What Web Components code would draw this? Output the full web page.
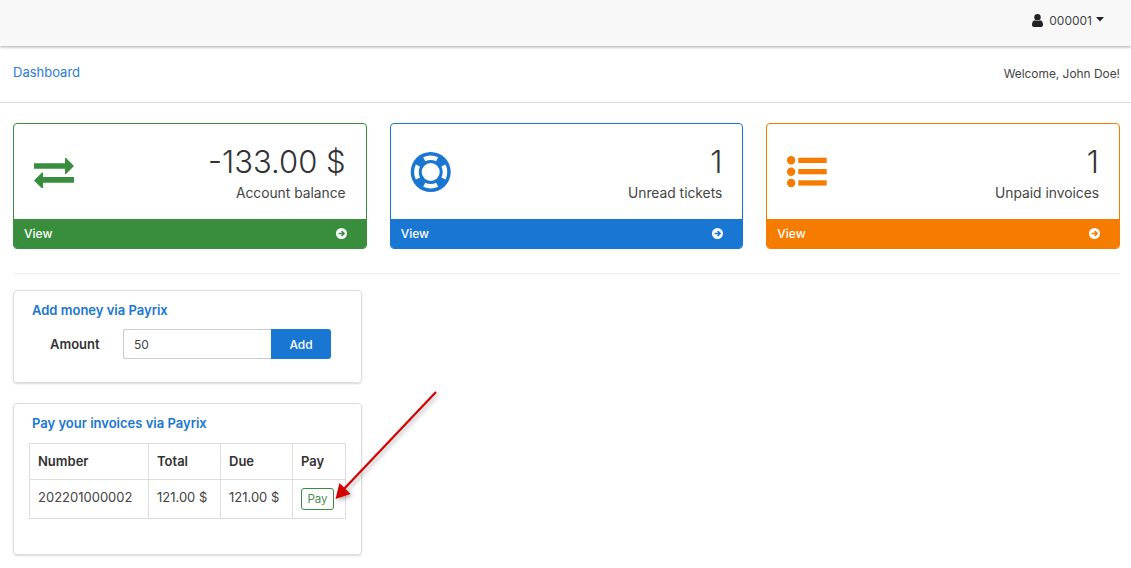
<!DOCTYPE html>
<html>
<head>
<meta charset="utf-8">
<title>Dashboard</title>
<style>
    html, body{
        margin: 0;
        background-color: #fff;
        font-family: Inter, "Liberation Sans", sans-serif;
        font-size: 13px;
        color: #333;
    }
    body{
        position: relative;
        height: 568px;
        overflow: hidden;
    }
</style>
</head>
<body>
<app-navbar account="000001"></app-navbar>
<app-crumbs welcome="Welcome, John Doe!">Dashboard</app-crumbs>
<app-content>
    <stat-row>
        <stat-card color="#388e3c" value="-133.00 $" label="Account balance" icon="exchange"></stat-card>
        <stat-card color="#1976d2" value="1" label="Unread tickets" icon="ring"></stat-card>
        <stat-card color="#f57c00" value="1" label="Unpaid invoices" icon="list"></stat-card>
    </stat-row>
    <app-panel heading="Add money via Payrix" pad="add"><money-form></money-form></app-panel>
    <app-panel heading="Pay your invoices via Payrix" pad="pay"><invoice-table></invoice-table></app-panel>
</app-content>
<pay-arrow></pay-arrow>

<script>
const ICONS = {
    exchange: `<svg width="42" height="32" viewBox="0 0 42 32"><path d="M1 7.300H32V2H33L41 10L33 18H32V12.700H1Z"/><path d="M41 21H10V16.500H9L1 24.500L9 32.500H10V26.700H41Z"/></svg>`,
    ring: `<svg width="41" height="40" viewBox="0 0 41 40"><circle cx="20.700" cy="20" r="20"/><circle cx="20.700" cy="20" r="14.300" fill="none" stroke="#fff" stroke-width="4.600" pathLength="360" stroke-dasharray="54 36" stroke-dashoffset="27"/><circle cx="20.700" cy="20" r="9" fill="#fff"/></svg>`,
    list: `<svg width="42" height="34" viewBox="0 0 42 34"><circle cx="5.150" cy="5.300" r="4.200"/><circle cx="5.150" cy="16.700" r="4.200"/><circle cx="5.150" cy="28" r="4.200"/><rect x="12.300" y="2.700" width="28.400" height="5.300"/><rect x="12.300" y="14" width="28.400" height="5.300"/><rect x="12.300" y="25.300" width="28.400" height="5.300"/></svg>`
}

class AppNavbar extends HTMLElement {
    constructor(){
        super();
        this.attachShadow({mode: 'open'});
        this.shadowRoot.innerHTML = `
        <style>
            :host{
                display: flex;
                justify-content: flex-end;
                align-items: center;
                height: 46px;
                box-sizing: border-box;
                padding: 0 27px 6px 0;
                background-color: #f8f8f8;
                box-shadow: 0 1px 3px rgba(0,0,0,.35);
                position: relative;
                font-size: 12px;
                color: #444;
            }
            .user{ display: block; margin-right: 6px; }
            .caret{ display: block; margin-left: 4px; margin-top: -2px; }
        </style>
        <svg class="user" width="11" height="13" viewBox="0 0 11 13" fill="#222"><circle cx="5.500" cy="3.200" r="3.200"/><path d="M0 11C0 8 1 6.500 2.800 6.200C4.300 7.300 6.700 7.300 8.200 6.200C10 6.500 11 8 11 11C11 12.300 10.300 13 9 13H2C.7 13 0 12.300 0 11Z"/></svg>
        <span>${this.getAttribute('account')}</span>
        <svg class="caret" width="8" height="5" viewBox="0 0 8 5" fill="#222"><path d="M0 0H8L4 4.500Z"/></svg>`;
    }
}

class AppCrumbs extends HTMLElement {
    constructor(){
        super();
        this.attachShadow({mode: 'open'});
        this.shadowRoot.innerHTML = `
        <style>
            :host{
                display: flex;
                justify-content: space-between;
                align-items: center;
                height: 52px;
                margin-top: 1px;
                padding: 0 11px 3px 13px;
                border-bottom: 1px solid #ddd;
            }
            a{ color: #2b7bd8; text-decoration: none; font-size: 13px; padding-bottom: 2px; }
            span{ font-size: 11.900px; color: #444; }
        </style>
        <a href="#"><slot></slot></a>
        <span>${this.getAttribute('welcome')}</span>`;
    }
}

class AppContent extends HTMLElement {
    constructor(){
        super();
        this.attachShadow({mode: 'open'});
        this.shadowRoot.innerHTML = `
        <style>
            :host{
                display: block;
                padding: 20px 11px 0 13px;
            }
        </style>
        <slot></slot>`;
    }
}

class StatRow extends HTMLElement {
    constructor(){
        super();
        this.attachShadow({mode: 'open'});
        this.shadowRoot.innerHTML = `
        <style>
            :host{
                display: grid;
                grid-template-columns: repeat(3, 1fr);
                column-gap: 23px;
                padding-bottom: 24px;
                margin-bottom: 16px;
                border-bottom: 1px solid #eee;
            }
        </style>
        <slot></slot>`;
    }
}

class StatCard extends HTMLElement {
    constructor(){
        super();
        this.attachShadow({mode: 'open'});
        const color = this.getAttribute('color');
        this.shadowRoot.innerHTML = `
        <style>
            :host{
                display: flex;
                flex-direction: column;
                height: 126px;
                box-sizing: border-box;
                border: 1px solid ${color};
                border-radius: 4px;
                overflow: hidden;
            }
            .body{
                flex: 1;
                display: flex;
                justify-content: space-between;
                align-items: center;
                padding: 0 20px 0 19px;
            }
            .icon{ display: flex; fill: ${color}; }
            .info{ text-align: right; }
            .value{
                font-size: 31px;
                font-weight: 300;
                line-height: 39px;
                color: #333;
            }
            .label{
                font-size: 13.800px;
                line-height: 17px;
                margin-top: 4px;
                color: #444;
            }
            .foot{
                display: flex;
                justify-content: space-between;
                align-items: center;
                height: 29px;
                padding: 0 19px 0 10px;
                background-color: ${color};
                color: #fff;
                font-size: 12px;
                font-weight: 500;
            }
            .foot svg{ display: block; }
        </style>
        <div class="body">
            <div class="icon">${ICONS[this.getAttribute('icon')]}</div>
            <div class="info">
                <div class="value">${this.getAttribute('value')}</div>
                <div class="label">${this.getAttribute('label')}</div>
            </div>
        </div>
        <div class="foot">
            <span>View</span>
            <svg width="11" height="11" viewBox="0 0 11 11"><circle cx="5.500" cy="5.500" r="5.500" fill="#fff"/><path d="M2.600 5.500H8M5.600 3L8.100 5.500L5.600 8" fill="none" stroke="${color}" stroke-width="1.600"/></svg>
        </div>`;
    }
}

class AppPanel extends HTMLElement {
    constructor(){
        super();
        this.attachShadow({mode: 'open'});
        this.shadowRoot.innerHTML = `
        <style>
            :host{
                display: block;
                width: 349px;
                box-sizing: border-box;
                border: 1px solid #ddd;
                border-radius: 4px;
                box-shadow: 0 1px 2px rgba(0,0,0,.15);
                margin-bottom: 20px;
                padding: 11px 15px 0 15px;
            }
            :host([pad="add"]){ height: 93px; }
            :host([pad="pay"]){ height: 152px; }
            h3{
                margin: 0 0 11px 3px;
                font-size: 13px;
                line-height: 16px;
                font-weight: 600;
                color: #1976d2;
            }
            :host([pad="pay"]) h3{ margin-bottom: 12px; }
        </style>
        <h3>${this.getAttribute('heading')}</h3>
        <slot></slot>`;
    }
}

class MoneyForm extends HTMLElement {
    constructor(){
        super();
        this.attachShadow({mode: 'open'});
        this.shadowRoot.innerHTML = `
        <style>
            :host{
                display: flex;
                align-items: center;
                height: 30px;
            }
            label{
                width: 94px;
                padding-left: 21px;
                box-sizing: border-box;
                font-weight: 600;
                font-size: 13px;
                color: #333;
            }
            input{
                width: 148px;
                height: 30px;
                box-sizing: border-box;
                padding: 0 10px;
                border: 1px solid #ccc;
                border-right: 0;
                border-radius: 3px 0 0 3px;
                font: inherit;
                font-size: 12px;
                color: #444;
                outline: none;
            }
            button{
                width: 60px;
                height: 30px;
                border: 0;
                border-radius: 0 3px 3px 0;
                background-color: #1976d2;
                color: #fff;
                font: inherit;
                font-size: 12px;
                font-weight: 500;
            }
        </style>
        <label>Amount</label>
        <input value="50">
        <button>Add</button>`;
    }
}

class InvoiceTable extends HTMLElement {
    constructor(){
        super();
        this.attachShadow({mode: 'open'});
        this.shadowRoot.innerHTML = `
        <style>
            :host{ display: block; }
            table{
                border-collapse: collapse;
                table-layout: fixed;
                width: 316px;
                font-size: 13px;
            }
            th, td{
                border: 1px solid #ddd;
                padding: 0 8px;
                text-align: left;
                color: #444;
            }
            th{ height: 33px; padding-bottom: 2px; font-weight: 600; color: #333; }
            td{ height: 34px; padding-bottom: 4px; }
            td.action{ height: 38px; padding-bottom: 0; }
            button{
                display: block;
                width: 33px;
                height: 22px;
                padding: 0;
                margin-bottom: 1px;
                background: #fff;
                border: 1px solid #388e3c;
                border-radius: 3px;
                color: #4c8f50;
                font: inherit;
                font-size: 11.500px;
            }
        </style>
        <table>
            <colgroup><col style="width:119px"><col style="width:72px"><col style="width:72px"><col style="width:53px"></colgroup>
            <tr><th>Number</th><th>Total</th><th>Due</th><th>Pay</th></tr>
            <tr><td>202201000002</td><td>121.00 $</td><td>121.00 $</td><td class="action"><button>Pay</button></td></tr>
        </table>`;
    }
}

// annotation drawn on top of the screenshot
class PayArrow extends HTMLElement {
    constructor(){
        super();
        this.attachShadow({mode: 'open'});
        this.shadowRoot.innerHTML = `
        <style>
            :host{
                position: absolute;
                left: 325px;
                top: 385px;
                display: block;
                width: 120px;
                height: 125px;
                pointer-events: none;
            }
            svg{ display: block; filter: drop-shadow(2px 2px 2px rgba(0,0,0,.3)); }
        </style>
        <svg width="120" height="125" viewBox="0 0 120 125"><path d="M111 7L18 105" stroke="#d40000" stroke-width="2.200" fill="none"/><path d="M10.500 114L14.500 98L25.500 109Z" fill="#d40000"/></svg>`;
    }
}

window.customElements.define('app-navbar', AppNavbar)
window.customElements.define('app-crumbs', AppCrumbs)
window.customElements.define('app-content', AppContent)
window.customElements.define('stat-row', StatRow)
window.customElements.define('stat-card', StatCard)
window.customElements.define('app-panel', AppPanel)
window.customElements.define('money-form', MoneyForm)
window.customElements.define('invoice-table', InvoiceTable)
window.customElements.define('pay-arrow', PayArrow)
</script>
</body>
</html>
